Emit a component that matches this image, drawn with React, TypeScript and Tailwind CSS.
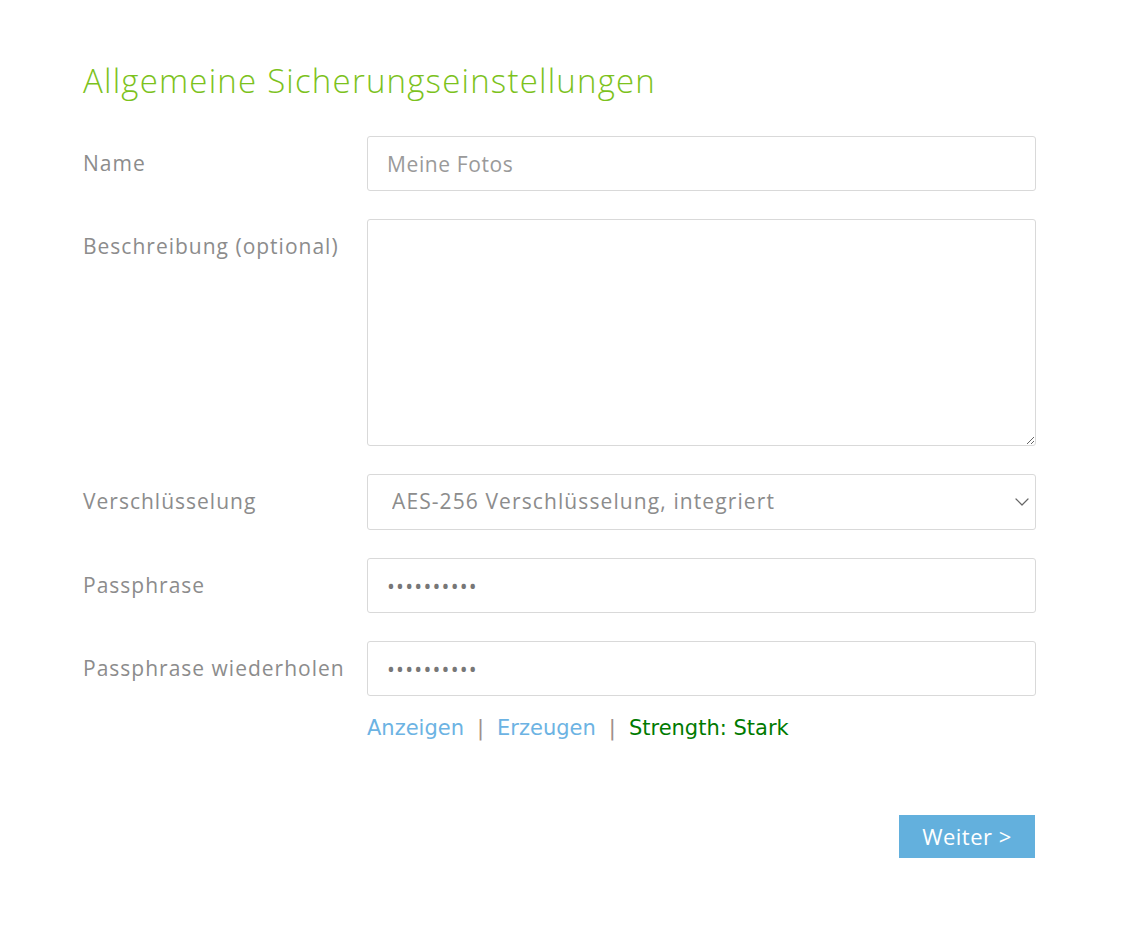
import { ChevronDown } from 'lucide-react';

const font = { fontFamily: '"Open Sans", "Noto Sans", sans-serif' };

export default function App() {
  return (
    <div className="min-h-screen bg-white" style={font}>
      <div className="pl-[83px] pr-[107px] pt-[58px]">
        <h1 className="text-[33px] font-light tracking-[1.2px] text-[#7cc21c] leading-[46px] mb-[32px]">
          Allgemeine Sicherungseinstellungen
        </h1>

        <div className="flex flex-col gap-[28px]">
          {/* Name */}
          <div className="flex items-center">
            <label className="w-[284px] text-[21px] tracking-[1px] text-[#8c8c8c]">Name</label>
            <input
              className="flex-1 h-[55px] border border-[#d9d9d9] rounded-[3px] px-[19px] text-[21px] tracking-[0.6px] text-[#8c8c8c] placeholder:text-[#9a9a9a] outline-none"
              placeholder="Meine Fotos"
            />
          </div>

          {/* Beschreibung */}
          <div className="flex items-start">
            <label className="w-[284px] text-[21px] tracking-[1px] text-[#8c8c8c] pt-[12px]">Beschreibung (optional)</label>
            <textarea className="flex-1 h-[227px] border border-[#d9d9d9] rounded-[3px] px-[19px] py-[12px] text-[21px] outline-none" />
          </div>

          {/* Verschlüsselung */}
          <div className="flex items-center">
            <label className="w-[284px] text-[21px] tracking-[1px] text-[#8c8c8c]">Verschlüsselung</label>
            <div className="flex-1 relative">
              <select className="w-full h-[56px] appearance-none border border-[#d9d9d9] rounded-[3px] pl-[24px] pr-[40px] text-[21px] tracking-[1.1px] text-[#8c8c8c] bg-white outline-none">
                <option>AES-256 Verschlüsselung, integriert</option>
              </select>
              <ChevronDown className="absolute right-[2px] top-1/2 -translate-y-1/2 w-[24px] h-[24px] text-[#666] pointer-events-none" strokeWidth={1.2} />
            </div>
          </div>

          {/* Passphrase */}
          <div className="flex items-center">
            <label className="w-[284px] text-[21px] tracking-[1px] text-[#8c8c8c]">Passphrase</label>
            <input
              type="password"
              defaultValue="geheim1234"
              className="flex-1 h-[55px] border border-[#d9d9d9] rounded-[3px] px-[19px] text-[21px] tracking-[1.2px] text-[#777] outline-none"
            />
          </div>

          {/* Passphrase wiederholen */}
          <div className="flex flex-col gap-[17px]">
            <div className="flex items-center">
              <label className="w-[284px] text-[21px] tracking-[1px] text-[#8c8c8c]">Passphrase wiederholen</label>
              <input
                type="password"
                defaultValue="geheim1234"
                className="flex-1 h-[55px] border border-[#d9d9d9] rounded-[3px] px-[19px] text-[21px] tracking-[1.2px] text-[#777] outline-none"
              />
            </div>
            <div className="pl-[284px] flex items-center gap-[13px]" style={{ fontFamily: '"DejaVu Sans", sans-serif', fontSize: '21px' }}>
              <a href="#" className="text-[#6cb3e3]">Anzeigen</a>
              <span className="text-[#a08f8a]">|</span>
              <a href="#" className="text-[#6cb3e3]">Erzeugen</a>
              <span className="text-[#a08f8a]">|</span>
              <span className="text-[#007a00]">Strength: Stark</span>
            </div>
          </div>
        </div>

        <div className="flex justify-end mt-[70px] mr-[1px]">
          <button className="w-[136px] h-[43px] bg-[#63b0dd] text-white text-[22px] tracking-[0.5px]">
            Weiter &gt;
          </button>
        </div>
      </div>
    </div>
  );
}
